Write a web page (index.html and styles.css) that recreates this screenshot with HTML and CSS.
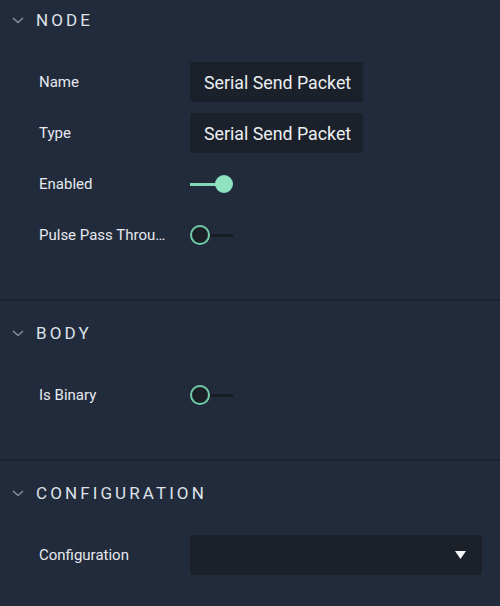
FILE: index.html
```html
<!DOCTYPE html>
<html>
<head>
<meta charset="utf-8">
<link rel="stylesheet" href="styles.css">
</head>
<body>
<div class="panel">
  <section class="section">
    <div class="section-header">
      <svg class="chevron" width="12" height="7" viewBox="0 0 12 7"><path d="M1 1 L6 5.5 L11 1" fill="none" stroke="#858b96" stroke-width="1.6"/></svg>
      <span class="section-title">NODE</span>
    </div>
    <div class="rows">
      <div class="row">
        <div class="label">Name</div>
        <div class="field">Serial Send Packet</div>
      </div>
      <div class="row">
        <div class="label">Type</div>
        <div class="field">Serial Send Packet</div>
      </div>
      <div class="row">
        <div class="label">Enabled</div>
        <div class="toggle on"><div class="track"></div><div class="knob"></div></div>
      </div>
      <div class="row">
        <div class="label">Pulse Pass Through</div>
        <div class="toggle off"><div class="knob"></div><div class="track"></div></div>
      </div>
    </div>
  </section>
  <section class="section">
    <div class="section-header">
      <svg class="chevron" width="12" height="7" viewBox="0 0 12 7"><path d="M1 1 L6 5.5 L11 1" fill="none" stroke="#858b96" stroke-width="1.6"/></svg>
      <span class="section-title">BODY</span>
    </div>
    <div class="rows">
      <div class="row">
        <div class="label">Is Binary</div>
        <div class="toggle off"><div class="knob"></div><div class="track"></div></div>
      </div>
    </div>
  </section>
  <section class="section">
    <div class="section-header">
      <svg class="chevron" width="12" height="7" viewBox="0 0 12 7"><path d="M1 1 L6 5.5 L11 1" fill="none" stroke="#858b96" stroke-width="1.6"/></svg>
      <span class="section-title">CONFIGURATION</span>
    </div>
    <div class="rows">
      <div class="row">
        <div class="label">Configuration</div>
        <div class="select">
          <svg class="caret" width="11" height="8" viewBox="0 0 11 8"><path d="M0 0 H11 L5.5 8 Z" fill="#f2f3f6"/></svg>
        </div>
      </div>
    </div>
  </section>
</div>
</body>
</html>
```

FILE: styles.css
```css
html, body {
  margin: 0;
  padding: 0;
  background: #222b3b;
}
body {
  width: 500px;
  height: 606px;
  overflow: hidden;
  font-family: Roboto, "Liberation Sans", sans-serif;
  color: #e4e8ee;
}
.section {
  border-top: 2px solid #1b2230;
  padding: 12px 0 44px;
}
.section:first-child {
  border-top: none;
  padding-top: 0;
}
.section-header {
  height: 40px;
  display: flex;
  align-items: center;
}
.chevron {
  margin-left: 12px;
  margin-right: 12px;
}
.section-title {
  font-size: 17px;
  letter-spacing: 3.1px;
  color: #dde2ea;
}
.rows {
  margin-top: 22px;
  display: flex;
  flex-direction: column;
  gap: 11px;
}
.row {
  height: 40px;
  display: flex;
  align-items: center;
}
.label {
  width: 128px;
  margin-left: 39px;
  margin-right: 23px;
  font-size: 15px;
  white-space: nowrap;
  overflow: hidden;
  text-overflow: ellipsis;
  color: #e6e9ef;
}
.field {
  height: 40px;
  display: flex;
  align-items: center;
  padding: 0 12px 0 14px;
  background: #1b212b;
  border-radius: 2px;
  font-size: 17.8px;
  color: #eceef2;
}
.toggle {
  width: 43px;
  height: 20px;
  display: flex;
  align-items: center;
}
.toggle .track {
  height: 3px;
  flex: 1;
}
.toggle.on .track {
  background: #86d9b6;
}
.toggle.on .knob {
  width: 18px;
  height: 18px;
  border-radius: 50%;
  background: #8ee2be;
  margin-left: -8px;
}
.toggle.off .knob {
  box-sizing: border-box;
  width: 20px;
  height: 20px;
  border-radius: 50%;
  border: 2.5px solid #72cda4;
  background: #1a1f28;
}
.toggle.off .track {
  background: #171c24;
}
.select {
  width: 292px;
  height: 40px;
  box-sizing: border-box;
  background: #1b2029;
  border-radius: 3px;
  display: flex;
  align-items: center;
  justify-content: flex-end;
  padding-right: 16px;
}
.caret {
  display: block;
}
```
